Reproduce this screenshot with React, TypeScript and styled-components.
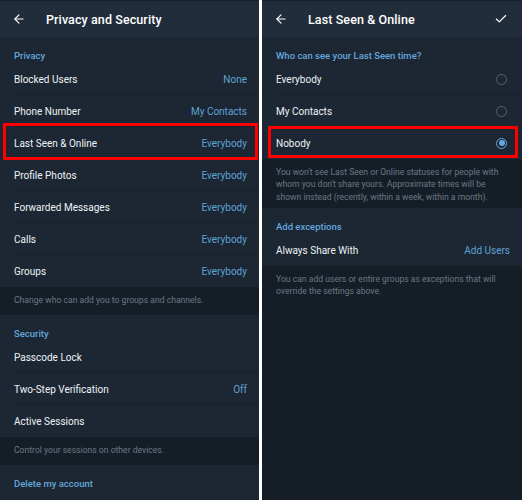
import styled, { createGlobalStyle } from "styled-components";
import { ArrowLeft, Check } from "lucide-react";

const GlobalStyle = createGlobalStyle`
    html, body {
        margin: 0;
        padding: 0;
        background: #ffffff;
    }
    body {
        font-family: Roboto, "Liberation Sans", sans-serif;
        -webkit-font-smoothing: antialiased;
    }
`;

const Screen = styled.div`
    display: flex;
    gap: 3px;
    width: 522px;
    height: 500px;
    overflow: hidden;
    background: #ffffff;
`;

const Panel = styled.div<{ $width: number }>`
    position: relative;
    display: flex;
    flex-direction: column;
    width: ${(p) => p.$width}px;
    height: 500px;
    background: #151e27;
    overflow: hidden;
`;

const Header = styled.div`
    display: flex;
    align-items: center;
    height: 37px;
    flex-shrink: 0;
    padding: 0 14px 0 12px;
    background: #212d3b;
    color: #ffffff;
    border-top: 1px solid #18212b;
    box-sizing: border-box;
`;

const HeaderButton = styled.span`
    display: flex;
    align-items: center;
    width: 22px;
    margin-right: 12px;
    color: #ffffff;
`;

const Title = styled.div`
    flex: 1;
    font-size: 12.5px;
    font-weight: 500;
    letter-spacing: 0.1px;
`;

const Section = styled.div<{ $grow?: boolean }>`
    background: #1d2733;
    flex: ${(p) => (p.$grow ? 1 : "none")};
`;

const SectionTitle = styled.div`
    height: 26px;
    padding: 0 14px 1px 14px;
    display: flex;
    align-items: flex-end;
    box-sizing: border-box;
    color: #62a6dc;
    font-size: 9.5px;
    font-weight: 500;
    line-height: 12px;
`;

const Row = styled.div<{ $divider?: boolean }>`
    position: relative;
    display: flex;
    align-items: center;
    justify-content: space-between;
    height: 32px;
    padding: 0 12px 0 14px;
    color: #eef2f6;
    font-size: 10px;

    ${(p) =>
        p.$divider &&
        `
        &::after {
            content: "";
            position: absolute;
            left: 14px;
            right: 0;
            bottom: 0;
            height: 1px;
            background: #17202a;
        }
    `}
`;

const Value = styled.span`
    color: #5fa2d6;
    font-size: 10px;
`;

const Info = styled.div<{ $height?: number }>`
    padding: 7px 14px 0 14px;
    min-height: ${(p) => p.$height ?? 28}px;
    box-sizing: border-box;
    color: #6b7784;
    font-size: 8.6px;
    line-height: 12.4px;
`;

const Radio = styled.span<{ $checked?: boolean }>`
    position: relative;
    width: 9px;
    height: 9px;
    border-radius: 50%;
    border: 1.8px solid ${(p) => (p.$checked ? "#63a8de" : "#56626f")};
    margin-right: 3px;

    ${(p) =>
        p.$checked &&
        `
        &::after {
            content: "";
            position: absolute;
            left: 1.5px;
            top: 1.5px;
            width: 6px;
            height: 6px;
            border-radius: 50%;
            background: #63a8de;
        }
    `}
`;

const Highlight = styled.div<{ $left: number; $top: number; $width: number; $height: number }>`
    position: absolute;
    left: ${(p) => p.$left}px;
    top: ${(p) => p.$top}px;
    width: ${(p) => p.$width}px;
    height: ${(p) => p.$height}px;
    border: 3px solid #ff0000;
    box-sizing: border-box;
    pointer-events: none;
`;

const privacyRows = [
    ["Blocked Users", "None"],
    ["Phone Number", "My Contacts"],
    ["Last Seen & Online", "Everybody"],
    ["Profile Photos", "Everybody"],
    ["Forwarded Messages", "Everybody"],
    ["Calls", "Everybody"],
    ["Groups", "Everybody"],
];

const securityRows = [
    ["Passcode Lock", ""],
    ["Two-Step Verification", "Off"],
    ["Active Sessions", ""],
];

const lastSeenOptions = ["Everybody", "My Contacts", "Nobody"];

function PrivacyPanel() {
    return (
        <Panel $width={259}>
            <Header>
                <HeaderButton><ArrowLeft size={14} strokeWidth={2} /></HeaderButton>
                <Title>Privacy and Security</Title>
            </Header>
            <Section>
                <SectionTitle>Privacy</SectionTitle>
                {privacyRows.map(([label, value], i) => (
                    <Row key={label} $divider={i < privacyRows.length - 1}>
                        <span>{label}</span>
                        <Value>{value}</Value>
                    </Row>
                ))}
            </Section>
            <Info>Change who can add you to groups and channels.</Info>
            <Section>
                <SectionTitle>Security</SectionTitle>
                {securityRows.map(([label, value], i) => (
                    <Row key={label} $divider={i < securityRows.length - 1}>
                        <span>{label}</span>
                        <Value>{value}</Value>
                    </Row>
                ))}
            </Section>
            <Info>Control your sessions on other devices.</Info>
            <Section $grow>
                <SectionTitle>Delete my account</SectionTitle>
            </Section>
            <Highlight $left={3} $top={123} $width={255} $height={37} />
        </Panel>
    );
}

function LastSeenPanel() {
    return (
        <Panel $width={260}>
            <Header>
                <HeaderButton><ArrowLeft size={14} strokeWidth={2} /></HeaderButton>
                <Title>Last Seen &amp; Online</Title>
                <Check size={14} strokeWidth={2} />
            </Header>
            <Section>
                <SectionTitle>Who can see your Last Seen time?</SectionTitle>
                {lastSeenOptions.map((option, i) => (
                    <Row key={option} $divider={i < lastSeenOptions.length - 1}>
                        <span>{option}</span>
                        <Radio $checked={option === "Nobody"} />
                    </Row>
                ))}
            </Section>
            <Info $height={49}>
                You won't see Last Seen or Online statuses for people with whom you don't share yours.
                Approximate times will be shown instead (recently, within a week, within a month).
            </Info>
            <Section>
                <SectionTitle>Add exceptions</SectionTitle>
                <Row>
                    <span>Always Share With</span>
                    <Value>Add Users</Value>
                </Row>
            </Section>
            <Info>
                You can add users or entire groups as exceptions that will override the settings above.
            </Info>
            <Highlight $left={6} $top={126} $width={250} $height={32} />
        </Panel>
    );
}

export default function App() {
    return (
        <>
            <GlobalStyle />
            <Screen>
                <PrivacyPanel />
                <LastSeenPanel />
            </Screen>
        </>
    );
}
